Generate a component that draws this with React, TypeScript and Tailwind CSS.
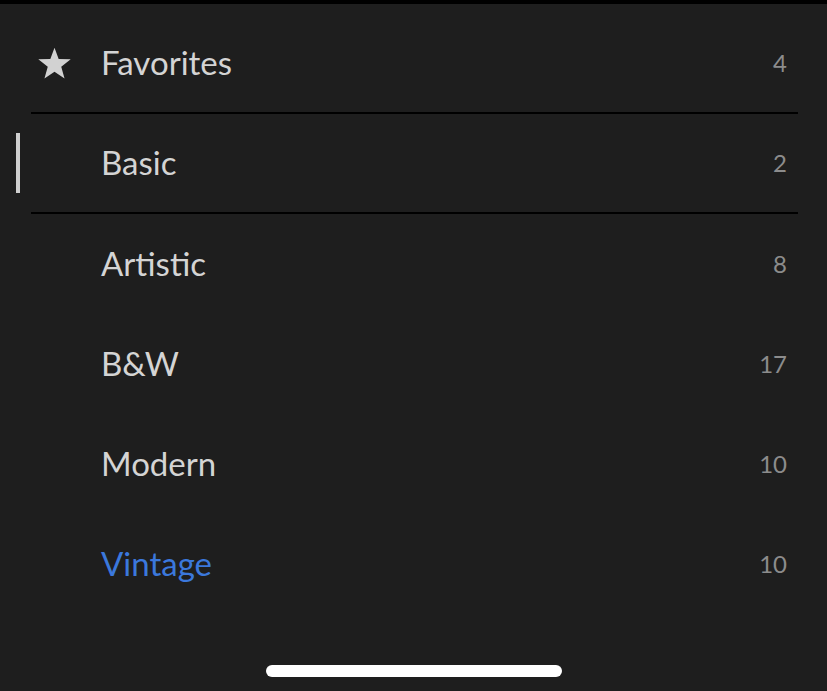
type Item = { name: string; count: number; star?: boolean; active?: boolean; blue?: boolean; divider?: boolean };

const items: Item[] = [
  { name: 'Favorites', count: 4, star: true, divider: true },
  { name: 'Basic', count: 2, active: true, divider: true },
  { name: 'Artistic', count: 8 },
  { name: 'B&W', count: 17 },
  { name: 'Modern', count: 10 },
  { name: 'Vintage', count: 10, blue: true },
];

function StarIcon() {
  // sharp five-point star, 35x33
  return (
    <svg width="35" height="33" viewBox="0 0 24 23">
      <polygon
        points="12,0.5 14.9,8.3 23.3,8.6 16.7,13.8 19,21.9 12,17.2 5,21.9 7.3,13.8 0.7,8.6 9.1,8.3"
        fill="#d2d2d2"
      />
    </svg>
  );
}

export default function App() {
  return (
    <div className="w-[827px] h-[691px] bg-[#1e1e1e] flex flex-col" style={{ fontFamily: 'Lato, "Noto Sans", sans-serif' }}>
      <div className="h-[4px] bg-black shrink-0" />
      <div className="pt-[10px] flex flex-col">
        {items.map((it) => (
          <div key={it.name} className="flex flex-col">
            <div className={`flex items-center pl-4 pr-[40px] ${it.divider ? 'h-[98px]' : 'h-[100px]'}`}>
              <div className={`w-[4px] h-[60px] ${it.active ? 'bg-[#cfcfcf]' : ''}`} />
              <div className="w-[35px] ml-[17px] flex items-center justify-center">
                {it.star && <StarIcon />}
              </div>
              <span className={`ml-[29px] text-[33px] ${it.blue ? 'text-[#3b78dc]' : 'text-[#d4d4d4]'}`}>{it.name}</span>
              <span className="ml-auto text-[24px] text-[#8c8c8c]">{it.count}</span>
            </div>
            {it.divider && <div className="h-[2px] bg-black mx-[31px] w-[767px]" />}
          </div>
        ))}
      </div>
      <div className="mt-auto mb-[14px] flex justify-center">
        <div className="w-[296px] h-[12px] rounded-full bg-white" />
      </div>
    </div>
  );
}
